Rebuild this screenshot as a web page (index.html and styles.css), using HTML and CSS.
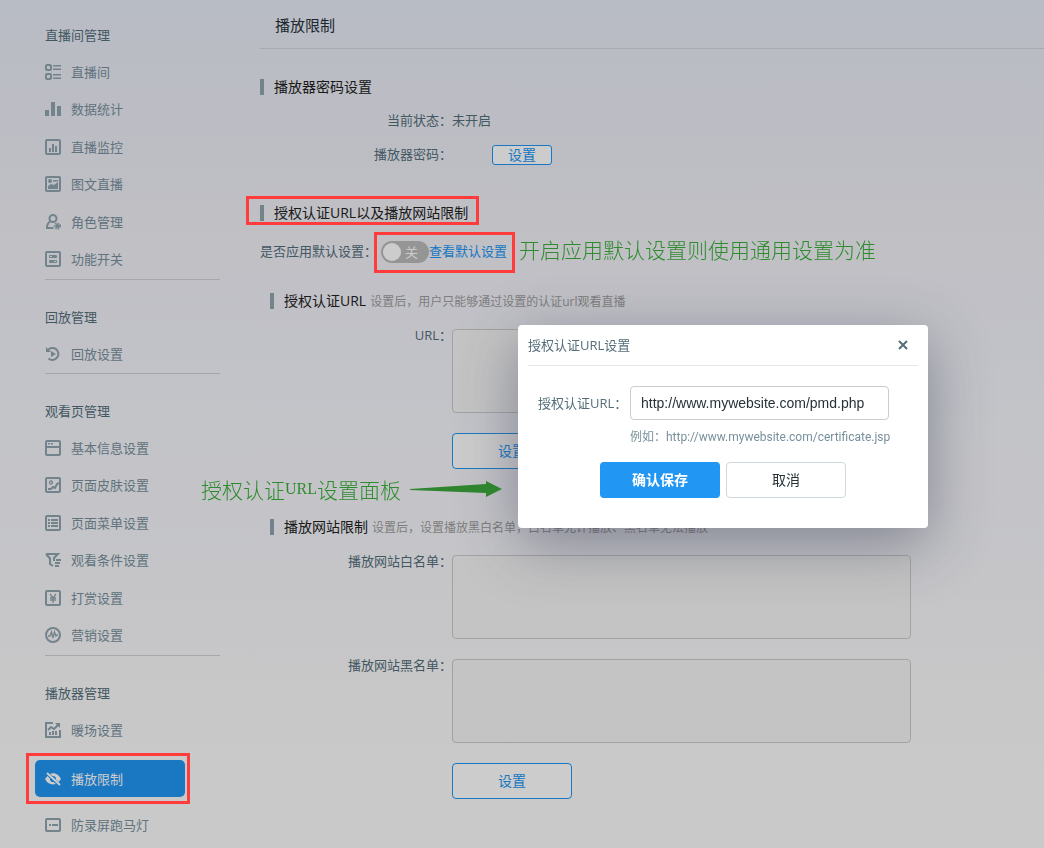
FILE: index.html
```html
<!DOCTYPE html>
<html lang="zh-CN">
<head>
    <meta charset="UTF-8">
    <meta name="viewport" content="width=device-width, initial-scale=1.0">
    <title>播放限制</title>
    <link rel="stylesheet" href="styles.css">
</head>
<body>
    <div class="page">
        <nav class="sidebar">
            <section class="menu">
                <h2>直播间管理</h2>
                <ul>
                    <li><a href="#">
                        <svg class="icon" viewBox="0 0 16 16"><rect x="1" y="1" width="5" height="5" rx="1" class="line"/><rect x="1" y="10" width="5" height="5" rx="1" class="line"/><path d="M8 1h8v1.500H8zM8 4.500h8V6H8zM8 10h8v1.500H8zM8 13.500h8V15H8z"/></svg>直播间</a></li>
                    <li><a href="#">
                        <svg class="icon" viewBox="0 0 16 16"><path d="M0 9h4v6H0zM6 1h4v14H6zM12 5h4v10h-4z"/></svg>数据统计</a></li>
                    <li><a href="#">
                        <svg class="icon" viewBox="0 0 16 16"><rect x="1" y="1" width="14" height="14" rx="1" class="line"/><path d="M4 9h2v4H4zM7 5h2v8H7zM10 7h2v6h-2z"/></svg>直播监控</a></li>
                    <li><a href="#">
                        <svg class="icon" viewBox="0 0 16 16"><rect x="1" y="1" width="14" height="14" rx="1" class="line"/><circle cx="5" cy="5" r="2"/><path d="M8 4h5v1.500H8zM3 10l3-2 3 1 4-3v7H3z"/></svg>图文直播</a></li>
                    <li><a href="#">
                        <svg class="icon" viewBox="0 0 16 16"><circle cx="8" cy="4.500" r="3.500" class="line"/><path d="M5 7.500C2.500 9 2 11 2 14h6.500" class="line"/><circle cx="12.500" cy="12" r="2.600" class="line dashed"/><circle cx="12.500" cy="12" r="2"/></svg>角色管理</a></li>
                    <li><a href="#">
                        <svg class="icon" viewBox="0 0 16 16"><rect x="1" y="1" width="14" height="14" rx="1" class="line"/><path fill-rule="evenodd" d="M5 4h6a1 1 0 0 1 1 1v1a1 1 0 0 1-1 1H5a1 1 0 0 1-1-1V5a1 1 0 0 1 1-1zM5 5v1h2V5zM5 9h6a1 1 0 0 1 1 1v1a1 1 0 0 1-1 1H5a1 1 0 0 1-1-1v-1a1 1 0 0 1 1-1zM9 10v1h2v-1z"/></svg>功能开关</a></li>
                </ul>
            </section>

            <section class="menu">
                <h2>回放管理</h2>
                <ul>
                    <li><a href="#">
                        <svg class="icon" viewBox="0 0 16 16"><path d="M2.500 4.500A6 6 0 1 1 3.500 12.500" class="line"/><path d="M1 1v5h5zM6 5l5 3-5 3z"/></svg>回放设置</a></li>
                </ul>
            </section>

            <section class="menu">
                <h2>观看页管理</h2>
                <ul>
                    <li><a href="#">
                        <svg class="icon" viewBox="0 0 16 16"><rect x="1" y="1" width="14" height="14" rx="1" class="line"/><path d="M1 6h14v2H1zM3 3h2v1.500H3zM6 3h2v1.500H6z"/></svg>基本信息设置</a></li>
                    <li><a href="#">
                        <svg class="icon" viewBox="0 0 16 16"><rect x="1" y="1" width="14" height="14" rx="1" class="line"/><circle cx="6" cy="5.500" r="1.500" class="thin"/><path d="M3 12h3l2-2 2 1 2-4 2-1" class="line"/></svg>页面皮肤设置</a></li>
                    <li><a href="#">
                        <svg class="icon" viewBox="0 0 16 16"><rect x="1" y="1" width="14" height="14" rx="1" class="line"/><path d="M3 4h2v2H3zM6 4h7v2H6zM3 7h2v2H3zM6 7h7v2H6zM3 10h2v2H3zM6 10h7v2H6z"/></svg>页面菜单设置</a></li>
                    <li><a href="#">
                        <svg class="icon" viewBox="0 0 16 16"><path d="M1 2h12L9 6v3M1 2l4 4.500V12l3 2" class="line"/><path d="M11 7h5v2h-5zM10 10h5v2h-5zM10 13h4v2h-4z"/></svg>观看条件设置</a></li>
                    <li><a href="#">
                        <svg class="icon" viewBox="0 0 16 16"><rect x="1" y="1" width="14" height="14" rx="1" class="line"/><path d="M5 4l3 4 3-4M8 8v5M5 8h6M5 10h6" class="thin"/></svg>打赏设置</a></li>
                    <li><a href="#">
                        <svg class="icon" viewBox="0 0 16 16"><circle cx="8" cy="8" r="7" class="line"/><path d="M3 9h2l1.500-4 1.500 6 1.500-6L11 9l1-1h1" class="thin"/></svg>营销设置</a></li>
                </ul>
            </section>

            <section class="menu menu-last">
                <h2>播放器管理</h2>
                <ul>
                    <li><a href="#">
                        <svg class="icon" viewBox="0 0 16 16"><path d="M8 1H1v14h14V8" class="line"/><path d="M3 8l3-3 3 2 4-4" class="line"/><path d="M10 1h5v5zM4 10h2v3H4zM7 9h2v4H7zM10 9h2v4h-2z"/></svg>暖场设置</a></li>
                    <li class="active"><a href="#">
                        <svg class="icon" viewBox="0 0 16 16"><path d="M5 3c5-2 9 1 11 5l-2.500 3L11 8.500A3 3 0 0 0 7.500 5zM2.500 5L0 8c2 4 6 6.500 11 5L8.500 11A3 3 0 0 1 5 7.500z"/><path d="M2 2l13 12" class="line"/></svg>播放限制</a></li>
                    <li><a href="#">
                        <svg class="icon" viewBox="0 0 16 16"><rect x="1" y="2" width="14" height="12" rx="1" class="line"/><path d="M4 7h2v2H4zM7 7h6v2H7z"/></svg>防录屏跑马灯</a></li>
                </ul>
            </section>
        </nav>

        <main class="content">
            <header class="content-header">
                <h1>播放限制</h1>
            </header>

            <h3 class="block-title">播放器密码设置</h3>
            <div class="row">
                <span class="row-label">当前状态：</span>
                <span>未开启</span>
            </div>
            <div class="row">
                <span class="row-label">播放器密码：</span>
                <button type="button" class="btn-small">设置</button>
            </div>

            <h3 class="block-title block-title-next">授权认证URL以及播放网站限制</h3>
            <div class="default-row">
                <label for="use-default">是否应用默认设置：</label>
                <span class="switch">
                    <input type="checkbox" id="use-default">
                    <span class="switch-text">关</span>
                </span>
                <a href="#">查看默认设置</a>
            </div>

            <section class="sub">
                <h4 class="block-title">授权认证URL <small>设置后，用户只能够通过设置的认证url观看直播</small></h4>
                <div class="field">
                    <label class="row-label" for="auth-url">URL：</label>
                    <textarea id="auth-url" readonly></textarea>
                </div>
                <button type="button" class="btn-outline">设置</button>
            </section>

            <section class="sub sub-next">
                <h4 class="block-title">播放网站限制 <small>设置后，设置播放黑白名单，白名单允许播放、黑名单无法播放</small></h4>
                <div class="field">
                    <label class="row-label" for="white-list">播放网站白名单：</label>
                    <textarea id="white-list" readonly></textarea>
                </div>
                <div class="field field-next">
                    <label class="row-label" for="black-list">播放网站黑名单：</label>
                    <textarea id="black-list" readonly></textarea>
                </div>
                <button type="button" class="btn-outline">设置</button>
            </section>
        </main>
    </div>

    <div class="mask"></div>

    <div class="dialog" role="dialog" aria-labelledby="dialog-title">
        <div class="dialog-header">
            <h2 id="dialog-title">授权认证URL设置</h2>
            <button type="button" class="close" aria-label="关闭">
                <svg viewBox="0 0 10 10"><path d="M1 1l8 8M9 1L1 9"/></svg>
            </button>
        </div>
        <div class="dialog-body">
            <label for="url-input">授权认证URL：</label>
            <div class="dialog-field">
                <input type="text" id="url-input" value="http://www.mywebsite.com/pmd.php">
                <p>例如：http://www.mywebsite.com/certificate.jsp</p>
            </div>
        </div>
        <div class="dialog-footer">
            <button type="button" class="btn-primary">确认保存</button>
            <button type="button" class="btn-cancel">取消</button>
        </div>
    </div>

    <!-- notes drawn over the page -->
    <div class="mark mark-title"></div>
    <div class="mark mark-switch"></div>
    <div class="mark mark-menu"></div>
    <p class="note note-switch">开启应用默认设置则使用通用设置为准</p>
    <p class="note note-dialog">授权认证<span>URL</span>设置面板
        <svg viewBox="0 0 92 16"><path d="M0 8l76-5V0l16 8-16 8v-4L0 9z"/></svg>
    </p>
</body>
</html>
```

FILE: styles.css
```css
* {
    margin: 0;
    padding: 0;
    box-sizing: border-box;
}

body {
    font-family: "Open Sans", "Noto Sans CJK SC", sans-serif;
    font-size: 13px;
    line-height: 20px;
    color: #546e7a;
    background: #fcfcfc;
}

button, input, textarea {
    font-family: inherit;
}

button {
    cursor: pointer;
}

a {
    color: #2196f3;
    text-decoration: none;
}

ul {
    list-style: none;
}

h1, h2, h3, h4 {
    font-weight: 400;
}

.page {
    display: flex;
    min-height: 100vh;
    background: linear-gradient(180deg, #e7ebf6 0%, #efeff6 25%, #f4f5fb 50%, #f8f8fb 75%, #fcfcfc 90%);
}

/* sidebar */
.sidebar {
    width: 220px;
    flex-shrink: 0;
    padding: 25px 0 0 45px;
}

.menu {
    border-bottom: 1px solid #cfd2d6;
    padding-bottom: 1px;
    margin-bottom: 27px;
}

.menu-last {
    border-bottom: none;
    margin-bottom: 0;
}

.menu h2 {
    font-size: 13px;
    margin-bottom: 8px;
}

.menu a {
    display: flex;
    align-items: center;
    gap: 10px;
    width: 150px;
    height: 37px;
    margin-left: -10px;
    padding: 0 10px;
    border-radius: 5px;
    color: #78909c;
}

.menu li:nth-child(even) {
    padding-bottom: 1px;
}

.menu .active {
    margin: 12px 0 8px;
}

.menu .active a {
    background: #2196f3;
    color: #fff;
}

.icon {
    width: 16px;
    height: 16px;
    flex-shrink: 0;
    fill: #90a4ae;
    stroke: none;
}

.icon .line {
    fill: none;
    stroke: #90a4ae;
    stroke-width: 2;
}

.icon .thin {
    fill: none;
    stroke: #90a4ae;
    stroke-width: 1.3;
}

.icon .dashed {
    stroke-dasharray: 1.4 1;
}

.active .icon {
    fill: #fff;
}

.active .icon .line {
    stroke: #fff;
}

/* content */
.content {
    flex: 1;
    min-width: 0;
    margin-left: 40px;
}

.content-header {
    padding: 15px 15px 13px;
    border-bottom: 1px solid #cfd8dc;
    margin-bottom: 28px;
}

.content-header h1 {
    font-size: 15px;
    color: #263238;
}

.block-title {
    display: flex;
    align-items: center;
    gap: 4px;
    font-size: 14px;
    color: #212121;
}

.block-title::before {
    content: "";
    width: 4px;
    height: 16px;
    margin-right: 6px;
    background: #90a4ae;
}

.block-title small {
    padding-top: 2px;
    font-size: 12px;
    line-height: 18px;
    color: #9e9e9e;
}

.block-title-next {
    margin-top: 38px;
}

.row {
    display: flex;
    min-height: 20px;
    margin-top: 14px;
    line-height: 18px;
}

.row-label {
    width: 192px;
    flex-shrink: 0;
    text-align: right;
}

.btn-small {
    width: 60px;
    height: 20px;
    margin-left: 40px;
    border: 1px solid #2196f3;
    border-radius: 3px;
    background: #fff;
    color: #2196f3;
    font-size: 14px;
    line-height: 18px;
}

.default-row {
    display: flex;
    align-items: flex-start;
    margin-top: 18px;
}

.switch {
    position: relative;
    height: 22px;
    margin-left: 4px;
}

.switch input {
    display: block;
    appearance: none;
    width: 48px;
    height: 22px;
    border-radius: 11px;
    background: #bbb;
}

.switch input::before {
    content: "";
    display: block;
    width: 18px;
    height: 18px;
    margin: 2px;
    float: left;
    border-radius: 50%;
    background: #fff;
}

.switch-text {
    position: absolute;
    top: 1px;
    right: 11px;
    color: #fff;
    pointer-events: none;
}

.sub {
    margin: 28px 20px 0 0;
}

.sub-next {
    margin-top: 48px;
}

.sub .block-title {
    padding-left: 10px;
}

.field {
    display: flex;
    margin-top: 18px;
}

.field-next {
    margin-top: 20px;
}

.field label {
    line-height: 12px;
}

.field textarea {
    flex: 1;
    max-width: 459px;
    height: 84px;
    border: 1px solid #ccc;
    border-radius: 4px;
    background: #f5f5f5;
    resize: none;
}

.btn-outline {
    display: block;
    width: 120px;
    height: 36px;
    margin: 20px 0 0 192px;
    padding-bottom: 2px;
    border: 1px solid #2196f3;
    border-radius: 4px;
    background: #fff;
    color: #2196f3;
    font-size: 14px;
}

.mask {
    position: fixed;
    top: 0;
    right: 0;
    bottom: 0;
    left: 0;
    background: rgba(0, 0, 0, 0.2);
}

/* dialog */
.dialog {
    position: absolute;
    top: 325px;
    left: 518px;
    width: 410px;
    padding: 0 10px 30px;
    border-radius: 4px;
    background: #fff;
    box-shadow: 0 16px 60px rgba(50, 56, 80, 0.45);
}

.dialog-header {
    display: flex;
    justify-content: space-between;
    align-items: center;
    height: 41px;
    border-bottom: 1px solid #e4e7e9;
}

.dialog-header h2 {
    font-size: 13px;
}

.close {
    width: 30px;
    height: 30px;
    border: none;
    background: none;
}

.close svg {
    display: block;
    width: 10px;
    height: 10px;
    margin: 0 auto;
    stroke: #546e7a;
    stroke-width: 2;
}

.dialog-body {
    display: flex;
    padding: 20px 10px 15px;
}

.dialog-body label {
    width: 92px;
    line-height: 34px;
}

.dialog-field input {
    display: block;
    width: 259px;
    height: 34px;
    padding: 0 10px;
    border: 1px solid #ccc;
    border-radius: 4px;
    font-family: "Liberation Sans", Arial, sans-serif;
    font-size: 14px;
    color: #263238;
}

.dialog-field p {
    margin-top: 7px;
    font-family: Roboto, "Noto Sans CJK SC", sans-serif;
    font-size: 12px;
    color: #78909c;
    white-space: nowrap;
}

.dialog-footer {
    display: flex;
    gap: 6px;
    padding-left: 72px;
}

.dialog-footer button {
    width: 120px;
    height: 36px;
    padding-bottom: 2px;
    border-radius: 4px;
    font-size: 14px;
}

.btn-primary {
    border: none;
    background: #2196f3;
    color: #fff;
    font-weight: 700;
}

.btn-cancel {
    border: 1px solid #cfd8dc;
    background: #fff;
    color: #263238;
}

/* notes */
.mark {
    position: absolute;
    border: 3px solid #ff3b3b;
    pointer-events: none;
}

.mark-title {
    top: 196px;
    left: 246px;
    width: 233px;
    height: 29px;
}

.mark-switch {
    top: 232px;
    left: 374px;
    width: 141px;
    height: 41px;
}

.mark-menu {
    top: 753px;
    left: 26px;
    width: 164px;
    height: 51px;
}

.note {
    position: absolute;
    display: flex;
    align-items: center;
    font-family: "Noto Sans CJK SC", sans-serif;
    font-size: 21px;
    font-weight: 300;
    line-height: 30px;
    color: #2e8b2e;
    white-space: nowrap;
    pointer-events: none;
}

.note-switch {
    top: 234px;
    left: 519px;
}

.note-dialog {
    top: 474px;
    left: 201px;
}

.note span {
    font-family: "Liberation Serif", serif;
    font-size: 16px;
}

.note svg {
    width: 92px;
    height: 16px;
    margin-left: 9px;
    fill: #2e852e;
}
```
